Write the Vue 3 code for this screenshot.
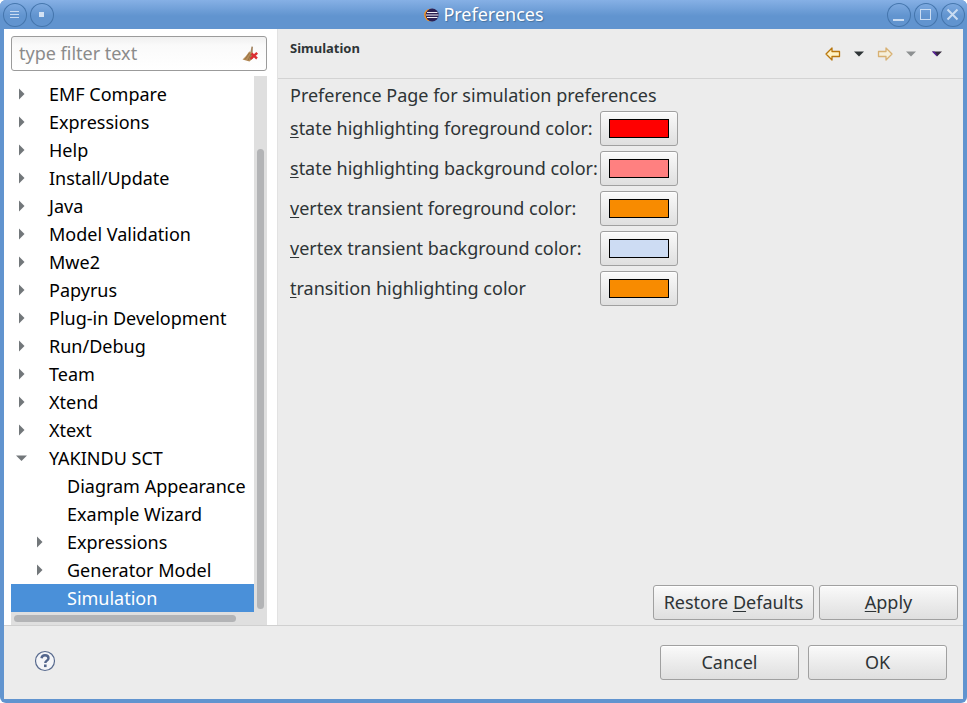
<script setup>
import { ref } from 'vue'

const filter = ref('')
const selected = ref('Simulation')

const tree = [
  { name: 'EMF Compare', level: 0, state: 'closed' },
  { name: 'Expressions', level: 0, state: 'closed' },
  { name: 'Help', level: 0, state: 'closed' },
  { name: 'Install/Update', level: 0, state: 'closed' },
  { name: 'Java', level: 0, state: 'closed' },
  { name: 'Model Validation', level: 0, state: 'closed' },
  { name: 'Mwe2', level: 0, state: 'closed' },
  { name: 'Papyrus', level: 0, state: 'closed' },
  { name: 'Plug-in Development', level: 0, state: 'closed' },
  { name: 'Run/Debug', level: 0, state: 'closed' },
  { name: 'Team', level: 0, state: 'closed' },
  { name: 'Xtend', level: 0, state: 'closed' },
  { name: 'Xtext', level: 0, state: 'closed' },
  { name: 'YAKINDU SCT', level: 0, state: 'open' },
  { name: 'Diagram Appearance', level: 1, state: 'leaf' },
  { name: 'Example Wizard', level: 1, state: 'leaf' },
  { name: 'Expressions', level: 1, state: 'closed' },
  { name: 'Generator Model', level: 1, state: 'closed' },
  { name: 'Simulation', level: 1, state: 'leaf' },
]

const colors = [
  { id: 'state-fg', key: 's', rest: 'tate highlighting foreground color:', value: '#ff0000' },
  { id: 'state-bg', key: 's', rest: 'tate highlighting background color:', value: '#ff8080' },
  { id: 'vertex-fg', key: 'v', rest: 'ertex transient foreground color:', value: '#f88b00' },
  { id: 'vertex-bg', key: 'v', rest: 'ertex transient background color:', value: '#cddcf3' },
  { id: 'transition', key: 't', rest: 'ransition highlighting color', value: '#f88b00' },
]
</script>

<template>
  <div class="window">
    <header class="titlebar">
      <div class="controls">
        <button class="round" aria-label="Window menu">
          <svg width="24" height="24" viewBox="0 0 24 24"><path d="M7 8.500h9M7 11.500h9M7 14.500h9" /></svg>
        </button>
        <button class="round" aria-label="Pin">
          <svg width="24" height="24" viewBox="0 0 24 24"><rect class="solid" x="9" y="9" width="5" height="5" /></svg>
        </button>
      </div>
      <h1 class="title">
        <svg width="15" height="14" viewBox="0 0 15 14">
          <circle cx="6.500" cy="7" r="6.300" fill="#f7941e" />
          <circle cx="8.200" cy="7" r="6.500" fill="#2c2255" />
          <path d="M3 4.500h10.500M2 7h12.500M3 9.500h10.500" stroke="#f3f1f8" fill="none" />
        </svg>
        <span>Preferences</span>
      </h1>
      <div class="controls right">
        <button class="round" aria-label="Minimize">
          <svg width="24" height="24" viewBox="0 0 24 24"><path class="thick" d="M6 17h11" /></svg>
        </button>
        <button class="round" aria-label="Maximize">
          <svg width="24" height="24" viewBox="0 0 24 24"><rect x="6.500" y="6.500" width="10" height="10" /></svg>
        </button>
        <button class="round" aria-label="Close">
          <svg width="24" height="24" viewBox="0 0 24 24"><path class="thick" d="M6.500 6.500l10 10M16.500 6.500l-10 10" /></svg>
        </button>
      </div>
    </header>

    <div class="body">
      <aside class="sidebar">
        <div class="filter">
          <input v-model="filter" type="text" placeholder="type filter text" aria-label="type filter text" />
          <button class="clear" aria-label="Clear" @click="filter = ''">
            <svg width="17" height="16" viewBox="0 0 17 16">
              <path d="M9.500 0.500L11 .8l-.5 6.400-2.200-.6z" fill="#a48663" />
              <path d="M7.200 5.500l3.500 1.500.5 5-3.700 3.500L.5 13.500 4 10z" fill="#b78d58" />
              <path d="M7.500 7L3 13.500M9 8l-3 6.500M9.500 9.500L8 14" stroke="#8a6741" stroke-width=".7" fill="none" />
              <path d="M9.500 7.500l5.500 5M15.200 6.800l-6.500 6" stroke="#dc2f33" stroke-width="2.400" fill="none" />
            </svg>
          </button>
        </div>
        <div class="tree-area">
          <ul class="tree" role="tree">
            <li
              v-for="(item, i) in tree"
              :key="i"
              role="treeitem"
              :class="['node', { child: item.level === 1, selected: item.name === selected }]"
              @click="selected = item.name"
            >
              <span class="twisty">
                <svg v-if="item.state === 'closed'" width="11" height="12" viewBox="0 0 11 12"><path d="M3 .5l5.500 5.500L3 11.500z" /></svg>
                <svg v-else-if="item.state === 'open'" width="11" height="12" viewBox="0 0 11 12"><path d="M0 3.500h11L5.500 9z" /></svg>
              </span>
              <span>{{ item.name }}</span>
            </li>
          </ul>
          <div class="vscroll"><div class="vthumb"></div></div>
          <div class="hscroll"><div class="hthumb"></div></div>
        </div>
      </aside>

      <main class="page">
        <div class="page-head">
          <h2>Simulation</h2>
          <div class="nav">
            <button class="arrow" aria-label="Back">
              <svg width="16" height="14" viewBox="0 0 16 14"><path d="M1 7L7 1V4.500h7.500v5H7V13z" fill="#fff3c4" stroke="#b9770e" stroke-width="1.300" stroke-linejoin="round" /></svg>
            </button>
            <button class="drop" aria-label="Back history">
              <svg width="10" height="6" viewBox="0 0 10 6"><path d="M0 .5h10L5 5.500z" fill="#2e3436" /></svg>
            </button>
            <button class="arrow" aria-label="Forward">
              <svg width="16" height="14" viewBox="0 0 16 14"><path d="M15 7L9 1V4.500H1.500v5H9V13z" fill="#f6efda" stroke="#d8b173" stroke-width="1.300" stroke-linejoin="round" /></svg>
            </button>
            <button class="drop" aria-label="Forward history">
              <svg width="10" height="6" viewBox="0 0 10 6"><path d="M0 .5h10L5 5.500z" fill="#8d9091" /></svg>
            </button>
            <button class="drop" aria-label="View menu">
              <svg width="10" height="6" viewBox="0 0 10 6"><path d="M0 .5h10L5 5.500z" fill="#352a3d" /><path d="M0 .5h2.500L5.500 5h-1z" fill="#5a1fa0" /></svg>
            </button>
          </div>
        </div>

        <div class="page-body">
          <p class="intro">Preference Page for simulation preferences</p>
          <div class="fields">
            <template v-for="c in colors" :key="c.id">
              <label :for="c.id"><u>{{ c.key }}</u>{{ c.rest }}</label>
              <button :id="c.id" class="btn swatch-btn"><span class="swatch" :style="{ background: c.value }"></span></button>
            </template>
          </div>
        </div>

        <div class="page-actions">
          <button class="btn restore"><span>Restore <u>D</u>efaults</span></button>
          <button class="btn"><span><u>A</u>pply</span></button>
        </div>
      </main>
    </div>

    <footer class="footer">
      <button class="help" aria-label="Help">
        <svg width="22" height="22" viewBox="0 0 22 22">
          <circle cx="11" cy="11" r="9.500" fill="#f4f5f8" stroke="#586a8e" stroke-width="1.200" />
          <path d="M7.500 8.300C7.800 6.300 9.200 5.300 11 5.300c2 0 3.500 1.100 3.500 2.900 0 2.400-3.200 2.400-3.200 4.800" fill="none" stroke="#52658c" stroke-width="2.400" />
          <rect x="10" y="14.500" width="2.600" height="2.600" fill="#52658c" />
        </svg>
      </button>
      <div class="dialog-actions">
        <button class="btn">Cancel</button>
        <button class="btn">OK</button>
      </div>
    </footer>
  </div>
</template>

<style>
body {
  background: #fff;
}
</style>

<style scoped>
* {
  box-sizing: border-box;
}

.window {
  min-height: 100vh;
  display: flex;
  flex-direction: column;
  padding: 0 4px 4px;
  background: #6194cf;
  border-radius: 6px;
  overflow: hidden;
  font-family: "Noto Sans", "Open Sans", sans-serif;
  font-size: 18px;
  line-height: 28px;
  color: #2e3436;
}

button {
  font: inherit;
  color: inherit;
  margin: 0;
  padding: 0;
  border: 0;
  background: none;
}

svg {
  display: block;
}

u {
  text-decoration-thickness: 1px;
  text-underline-offset: 2px;
}

.titlebar {
  height: 29px;
  margin: 0 -4px;
  padding: 0 2px 0 3px;
  display: grid;
  grid-template-columns: 1fr auto 1fr;
  align-items: center;
  background: linear-gradient(#86b0e5, #6194cf 55%);
}

.controls {
  display: flex;
  gap: 3px;
}

.controls.right {
  justify-content: flex-end;
}

.round {
  width: 24px;
  height: 24px;
  border-radius: 50%;
  box-shadow: inset 0 0 0 1px #4576ad;
}

.round svg {
  fill: none;
  stroke: #c9dcf2;
}

.round .thick {
  stroke-width: 2;
}

.round .solid {
  fill: #d3e2f4;
  stroke: none;
}

.title {
  margin: 0;
  display: flex;
  align-items: center;
  gap: 4px;
  font-size: 18px;
  font-weight: 400;
  color: #fff;
  text-shadow: 1px 1px 1px #46729f;
}

.title span {
  padding-bottom: 2px;
}

.body {
  flex: 1;
  display: flex;
}

.sidebar {
  flex: 0 0 273px;
  min-width: 0;
  display: flex;
  flex-direction: column;
  gap: 5px;
  padding: 7px 10px 0 7px;
  background: #fff;
}

.filter {
  height: 35px;
  display: flex;
  align-items: center;
  padding: 0 7px;
  border: 1px solid #9b9b9b;
  border-radius: 3px;
  background: linear-gradient(#f0f0f0, #fafafa 25%, #fff);
}

.filter input {
  flex: 1;
  width: 100%;
  min-width: 0;
  padding: 0 0 2px;
  border: 0;
  outline: 0;
  background: none;
  font: inherit;
  color: #2e3436;
}

.filter input::placeholder {
  color: #8b8b8b;
  opacity: 1;
}

.tree-area {
  flex: 1;
  display: grid;
  grid-template-columns: minmax(0, 1fr) 13px;
  grid-template-rows: 1fr 13px;
}

.tree {
  margin: 0;
  padding: 4px 0 0;
  list-style: none;
  color: #000;
}

.node {
  height: 28px;
  display: flex;
  align-items: center;
  gap: 22px;
  padding-left: 5px;
  white-space: nowrap;
}

.node.child {
  padding-left: 23px;
}

.node.selected {
  background: #4a90d9;
  color: #fff;
}

.twisty {
  width: 11px;
  fill: #72777a;
}

.vscroll {
  grid-row: 1 / 3;
  grid-column: 2;
  padding: 73px 3px 16px;
  background: #dfdfdf;
}

.hscroll {
  padding: 3px 18px 3px 3px;
  background: #dfdfdf;
}

.vthumb,
.hthumb {
  height: 100%;
  border-radius: 4px;
  background: #b3b4b6;
}

.page {
  flex: 1;
  min-width: 0;
  display: flex;
  flex-direction: column;
  background: #ececec;
  border-left: 1px solid #e2e2e2;
}

.page-head {
  height: 50px;
  display: flex;
  justify-content: space-between;
  padding: 5px 21px 0 12px;
  border-bottom: 1px solid #d3d3d3;
}

.page-head h2 {
  margin: 0;
  font-size: 13px;
  font-weight: 700;
}

.nav {
  display: flex;
  align-items: center;
  gap: 13px;
  padding-bottom: 4px;
}

.drop + .drop {
  margin-left: 3px;
}

.page-body {
  flex: 1;
  padding: 2px 12px;
}

.intro {
  margin: 0 0 2px;
}

.fields {
  display: grid;
  grid-template-columns: 305px 78px;
  align-items: center;
  gap: 5px;
}

.fields label {
  padding-bottom: 2px;
  white-space: nowrap;
}

.btn {
  width: 139px;
  height: 35px;
  padding-bottom: 2px;
  border: 1px solid #a0a0a0;
  border-radius: 3px;
  background: linear-gradient(#fafafa, #ececec 50%, #dfdfdf);
  box-shadow: inset 0 1px #fff;
}

.swatch-btn {
  width: 78px;
  padding: 0;
  display: flex;
  align-items: center;
  justify-content: center;
}

.swatch {
  width: 60px;
  height: 19px;
  border: 1px solid #000;
}

.restore {
  width: 161px;
}

.page-actions {
  display: flex;
  justify-content: flex-end;
  gap: 5px;
  padding: 5px;
}

.footer {
  display: flex;
  justify-content: space-between;
  align-items: center;
  padding: 19px 16px 19px 30px;
  background: #ececec;
  border-top: 1px solid #d0d0d0;
}

.help {
  padding-bottom: 4px;
}

.dialog-actions {
  display: flex;
  gap: 9px;
}
</style>
